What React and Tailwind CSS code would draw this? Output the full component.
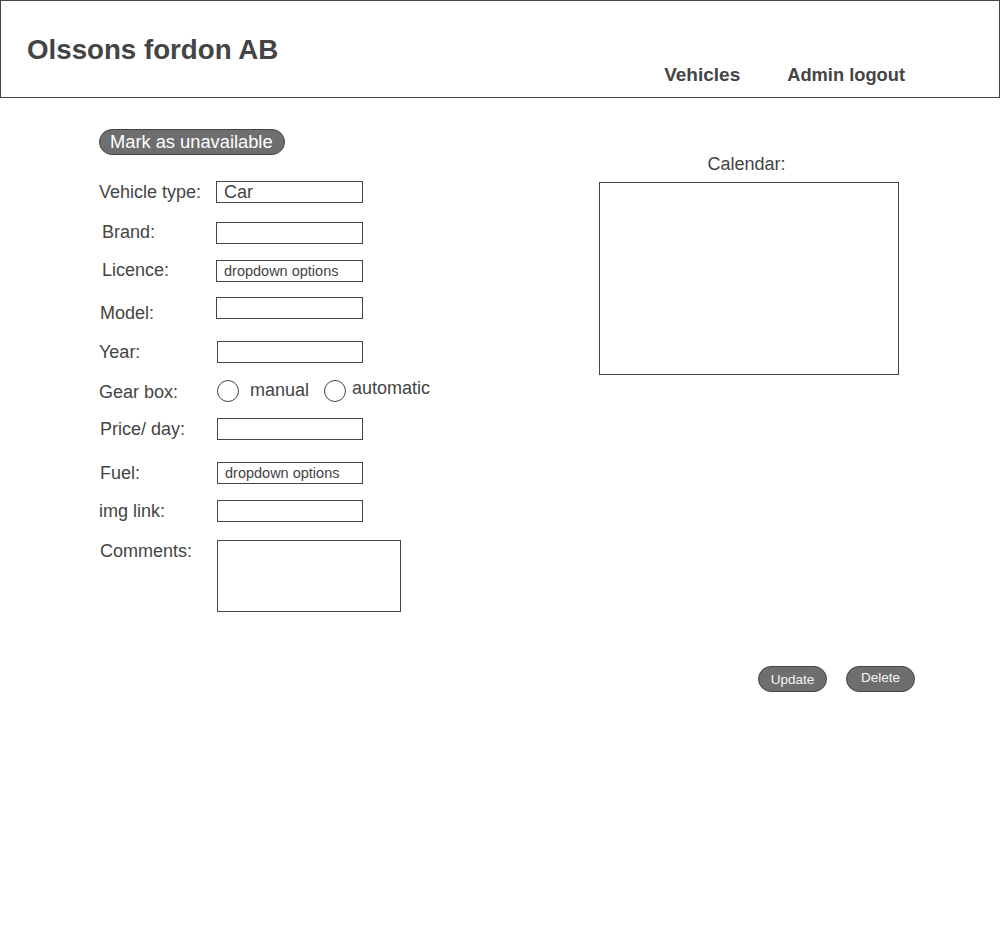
import React from 'react';

const font = { fontFamily: '"Liberation Sans", Arial, sans-serif' };

const Box = ({ className = '', children }) => (
  <div className={`h-[22px] border border-[#444] bg-white flex items-center ${className}`}>
    {children}
  </div>
);

const Label = ({ children, className = '' }) => (
  <div className={`w-[117px] shrink-0 text-[18px] leading-[22px] text-[#444] whitespace-nowrap ${className}`}>
    {children}
  </div>
);

const Radio = () => (
  <span className="block w-[22px] h-[22px] rounded-full border border-[#444] shrink-0" />
);

export default function App() {
  return (
    <div className="min-h-screen w-[1001px] bg-white text-[#444]" style={font}>
      {/* Header */}
      <header className="h-[98px] w-[1000px] border border-[#444] flex items-start">
        <h1 className="ml-[26px] mt-[33px] text-[27.7px] leading-[32px] font-bold text-[#444]">
          Olssons fordon AB
        </h1>
        <nav className="ml-auto mr-[94px] mt-[63px] flex gap-[47px] leading-[22px] font-bold text-[#444]">
          <span className="text-[19px]">Vehicles</span>
          <span className="text-[18.3px]">Admin logout</span>
        </nav>
      </header>

      <main className="flex">
        {/* Form column */}
        <section className="pl-[99px] pt-[31px] w-[500px] flex flex-col">
          <button className="self-start h-[26px] pl-[10px] pr-[11px] rounded-full bg-[#6e6e6e] border border-[#444] text-white text-[18.3px] leading-[22px]">
            Mark as unavailable
          </button>

          <div className="flex items-start h-[22px] mt-[26px]">
            <Label>Vehicle type:</Label>
            <Box className="w-[147px] pl-[7px] text-[18px]">Car</Box>
          </div>

          <div className="flex items-start h-[22px] mt-[19px]">
            <Label className="pl-[3px] -mt-px">Brand:</Label>
            <Box className="w-[147px]" />
          </div>

          <div className="flex items-start h-[22px] mt-[16px]">
            <Label className="pl-[3px] -mt-px">Licence:</Label>
            <Box className="w-[147px] pl-[7px] pt-[2px] text-[14.5px]">dropdown options</Box>
          </div>

          <div className="flex items-start h-[22px] mt-[15px]">
            <Label className="pl-[1px] mt-[5px]">Model:</Label>
            <Box className="w-[147px]" />
          </div>

          <div className="flex items-start h-[22px] mt-[22px]">
            <Label className="w-[118px]">Year:</Label>
            <Box className="w-[146px]" />
          </div>

          <div className="flex items-start h-[22px] mt-[17px]">
            <Label className="w-[118px] mt-px">Gear box:</Label>
            <Radio />
            <span className="ml-[11px] text-[18px] leading-[22px] -mt-px">manual</span>
            <span className="ml-[15px]"><Radio /></span>
            <span className="ml-[6px] text-[18px] leading-[22px] -mt-[3px]">automatic</span>
          </div>

          <div className="flex items-start h-[22px] mt-[16px]">
            <Label className="w-[118px] pl-[1px]">Price/ day:</Label>
            <Box className="w-[146px]" />
          </div>

          <div className="flex items-start h-[22px] mt-[22px]">
            <Label className="w-[118px] pl-[1px]">Fuel:</Label>
            <Box className="w-[146px] pl-[7px] pt-[2px] text-[14.5px]">dropdown options</Box>
          </div>

          <div className="flex items-start h-[22px] mt-[16px]">
            <Label className="w-[118px]">img link:</Label>
            <Box className="w-[146px]" />
          </div>

          <div className="flex items-start mt-[18px]">
            <Label className="w-[118px] pl-[1px]">Comments:</Label>
            <div className="w-[184px] h-[72px] border border-[#444]" />
          </div>
        </section>

        {/* Calendar column */}
        <section className="pl-[99px] pt-[55px] flex flex-col">
          <div className="w-[300px] pr-[5px] text-center text-[18px] leading-[22px]">Calendar:</div>
          <div className="mt-[7px] w-[300px] h-[193px] border border-[#444]" />
        </section>
      </main>

      <div className="flex pl-[758px] mt-[54px] gap-[19px]">
        <button className="w-[69px] h-[26px] rounded-full bg-[#6e6e6e] border border-[#444] text-[#f5f5f5] text-[13.5px] leading-[16px] pt-[2px]">
          Update
        </button>
        <button className="w-[69px] h-[26px] rounded-full bg-[#6e6e6e] border border-[#444] text-[#f5f5f5] text-[13.5px] leading-[16px] pb-[3px]">
          Delete
        </button>
      </div>
    </div>
  );
}
